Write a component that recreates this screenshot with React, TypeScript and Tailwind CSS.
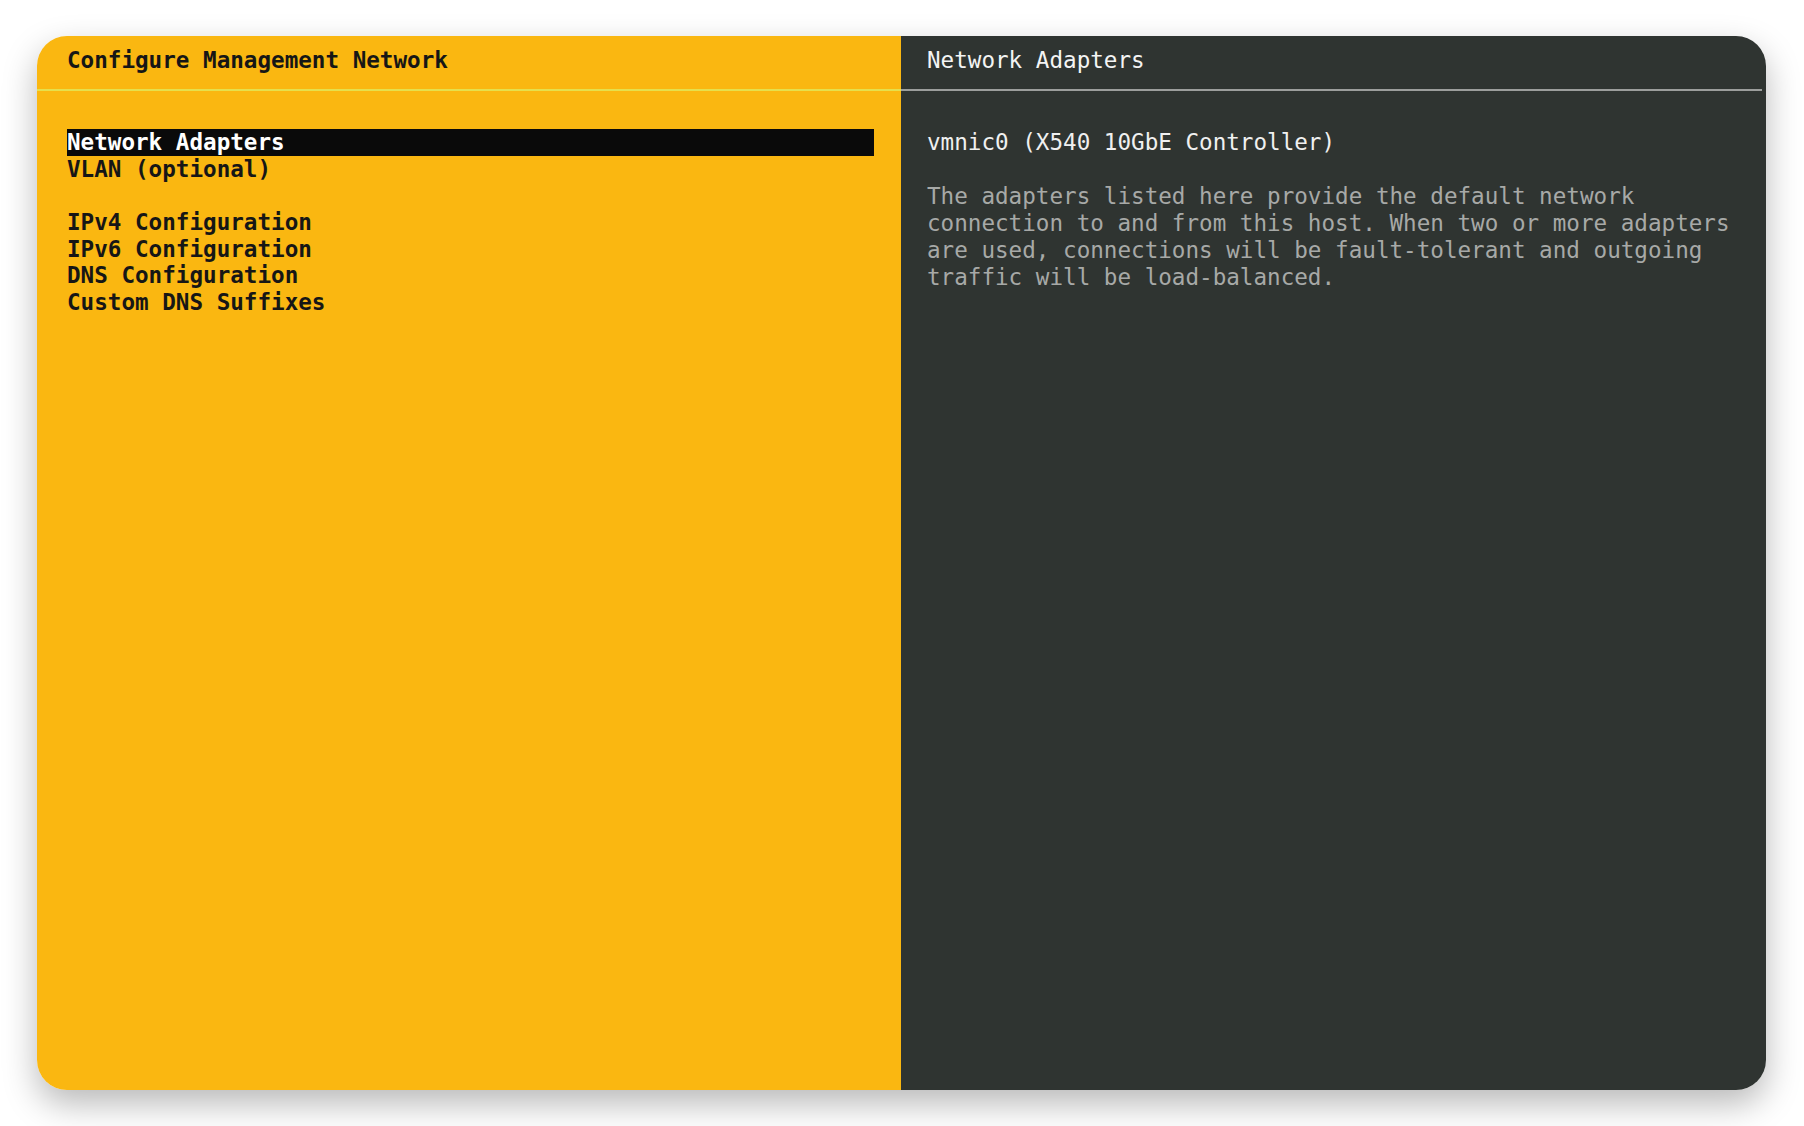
const menu: (string | null)[] = [
  "Network Adapters",
  "VLAN (optional)",
  null,
  "IPv4 Configuration",
  "IPv6 Configuration",
  "DNS Configuration",
  "Custom DNS Suffixes",
];

const description = [
  "The adapters listed here provide the default network",
  "connection to and from this host. When two or more adapters",
  "are used, connections will be fault-tolerant and outgoing",
  "traffic will be load-balanced.",
];

const mono = "font-['DejaVu_Sans_Mono','Liberation_Mono',monospace] text-[22.6px] whitespace-pre";

export default function App() {
  return (
    <div className="w-[1804px] h-[1126px] bg-white pl-[37px] pt-[36px]">
      <div className="w-[1729px] h-[1054px] rounded-[30px] overflow-hidden flex shadow-[0_14px_34px_rgba(0,0,0,0.28)]">
        {/* Left: menu */}
        <div className={`w-[864px] bg-[#fab711] flex flex-col ${mono}`}>
          <div className="h-[53px] pt-[11px] pl-[30px] leading-[26.7px] font-bold text-[#161616]">
            Configure Management Network
          </div>
          <div className="h-[2px] bg-[#e6e04c]" />
          <div className="pt-[38px] pl-[30px] pr-[27px] flex flex-col">
            {menu.map((item, i) =>
              item === null ? (
                <div key={i} className="h-[26.7px]" />
              ) : (
                <div
                  key={i}
                  className={`h-[26.7px] leading-[26.7px] font-bold ${
                    i === 0 ? "bg-[#0a0a0a] text-white" : "text-[#161616]"
                  }`}
                >
                  {item}
                </div>
              )
            )}
          </div>
        </div>

        {/* Right: details */}
        <div className={`flex-1 bg-[#2f3431] flex flex-col ${mono}`}>
          <div className="h-[53px] pt-[11px] pl-[26px] leading-[26.7px] text-[#f4f4f4]">
            Network Adapters
          </div>
          <div className="h-[2px] bg-[#9c9e9c] mr-[4px]" />
          <div className="pt-[38px] pl-[26px] flex flex-col">
            <div className="h-[26.7px] leading-[26.7px] text-[#f0f0f0]">
              vmnic0 (X540 10GbE Controller)
            </div>
            <div className="h-[27px]" />
            {description.map((line) => (
              <div key={line} className="h-[27.2px] leading-[27.2px] text-[#a7a9a7]">
                {line}
              </div>
            ))}
          </div>
        </div>
      </div>
    </div>
  );
}
